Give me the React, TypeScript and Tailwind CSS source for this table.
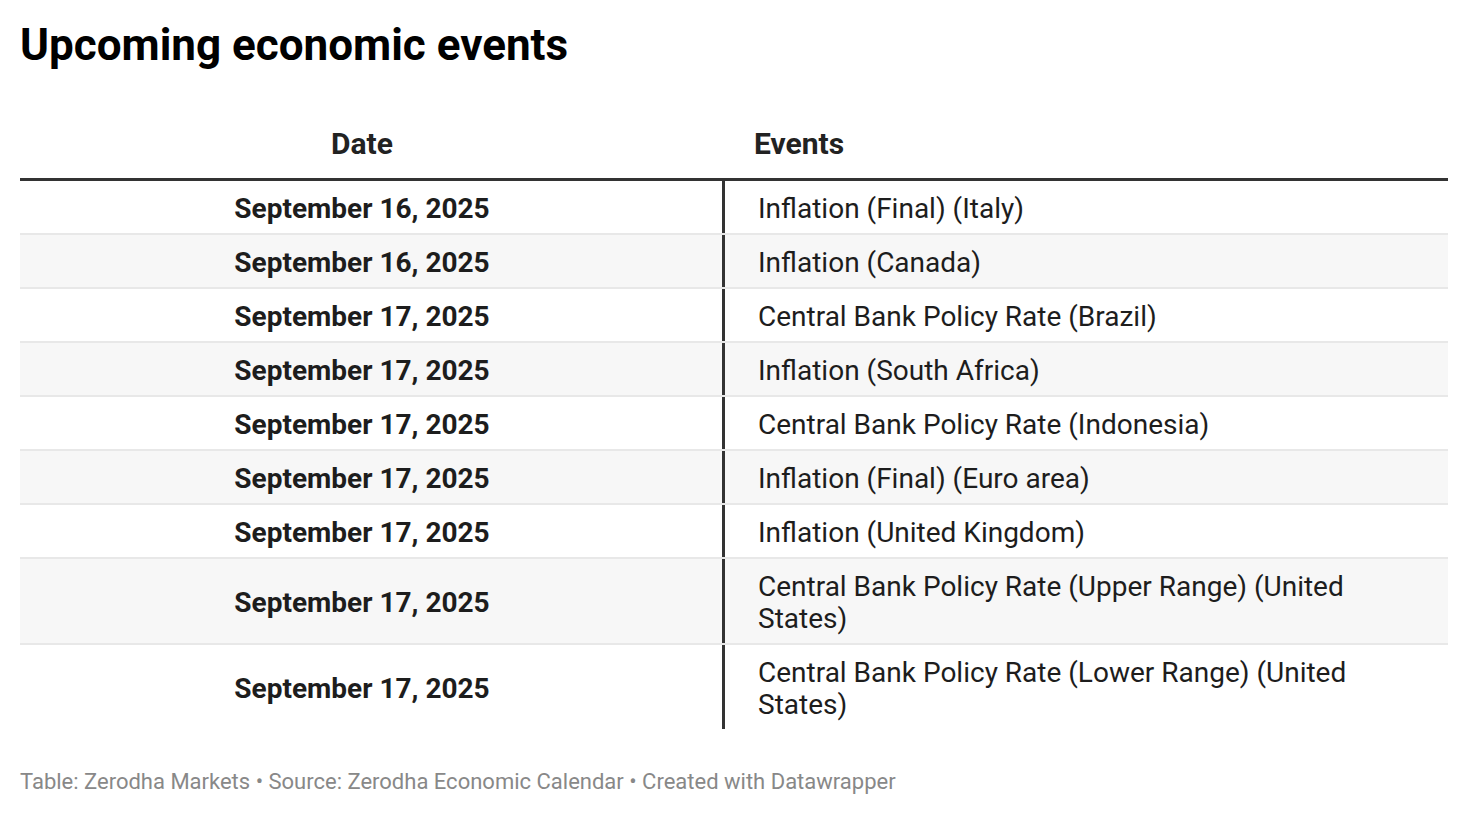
import React from "react";

const rows: { date: string; event: string }[] = [
  { date: "September 16, 2025", event: "Inflation (Final) (Italy)" },
  { date: "September 16, 2025", event: "Inflation (Canada)" },
  { date: "September 17, 2025", event: "Central Bank Policy Rate (Brazil)" },
  { date: "September 17, 2025", event: "Inflation (South Africa)" },
  { date: "September 17, 2025", event: "Central Bank Policy Rate (Indonesia)" },
  { date: "September 17, 2025", event: "Inflation (Final) (Euro area)" },
  { date: "September 17, 2025", event: "Inflation (United Kingdom)" },
  { date: "September 17, 2025", event: "Central Bank Policy Rate (Upper Range) (United States)" },
  { date: "September 17, 2025", event: "Central Bank Policy Rate (Lower Range) (United States)" },
];

export default function App() {
  return (
    <div
      className="w-[1468px] h-[816px] bg-white px-[20px] text-[#1d1d1d]"
      style={{ fontFamily: "Roboto, 'Liberation Sans', sans-serif" }}
    >
      <h1 className="pt-[21px] text-[44px] leading-[48px] font-bold text-black">
        Upcoming economic events
      </h1>

      <div className="mt-[59px] w-[1428px]">
        <div className="grid grid-cols-[702px_1fr] border-b-[3px] border-[#333333] pb-[18px] text-[30px] leading-[32px] font-bold text-[#222222]">
          <div className="text-center pr-[18px]">Date</div>
          <div className="pl-[32px]">Events</div>
        </div>

        {rows.map((r, i) => (
          <div
            key={i}
            className={
              "grid grid-cols-[702px_1fr] text-[28px] leading-[32px] " +
              (i % 2 === 1 ? "bg-[#f7f7f7] " : "bg-white ") +
              (i === rows.length - 1 ? "" : "border-b-2 border-[#e8e8e8]")
            }
          >
            <div className="flex items-center justify-center pr-[18px] pt-[12px] pb-[8px] font-bold text-[#1d1d1d]">
              {r.date}
            </div>
            <div className="border-l-[3px] border-[#333333] pl-[33px] pr-[32px] pt-[12px] pb-[8px]">
              {r.event}
            </div>
          </div>
        ))}
      </div>

      <div className="mt-[41px] text-[22px] leading-[24px] text-[#888888]">
        Table: Zerodha Markets • Source: Zerodha Economic Calendar • Created with Datawrapper
      </div>
    </div>
  );
}
